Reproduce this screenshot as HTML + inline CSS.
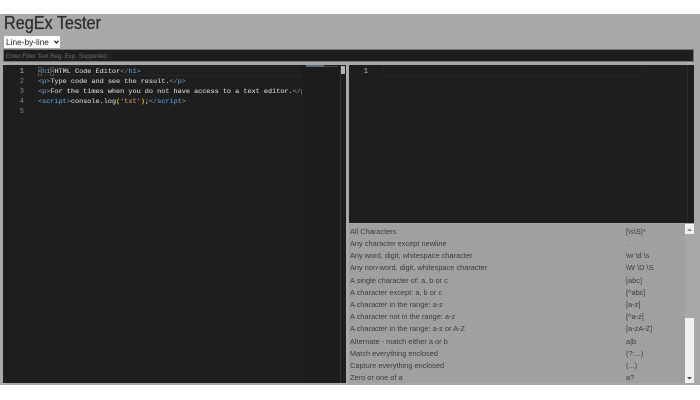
<!DOCTYPE html>
<html><head><meta charset="utf-8">
<style>
*{box-sizing:border-box}
html,body{margin:0;padding:0;width:700px;height:400px;background:#fff;overflow:hidden}
.a{position:absolute}
#page{position:absolute;left:0;top:14px;width:700px;height:371px;background:#a9a9a9;overflow:hidden}
body{font-family:"Liberation Sans",sans-serif}
.ln{position:absolute;font:7px/10px "Liberation Mono",monospace;color:#858585;width:16px;text-align:right}
.c{position:absolute;left:38px;font:6.85px/10px "Liberation Mono",monospace;color:#cfcfcf;white-space:pre;-webkit-text-stroke:.12px currentColor}
.t{color:#569cd6}.g{color:#808080}.y{color:#ffd700}.o{color:#ce9178}
.r{position:absolute;left:350px;width:330px;height:12px;font-size:7.4px;line-height:12px;color:#3c3c3c;white-space:pre}
.r b{position:absolute;left:276px;font-weight:normal}
</style></head><body>
<div id="page"></div>
<div class="a" style="left:4px;top:12px;font-size:18px;line-height:22px;font-weight:normal;color:#2b2f33;-webkit-text-stroke:.3px #2b2f33;transform:scaleX(.9);transform-origin:left top;white-space:nowrap">RegEx Tester</div>
<div class="a" style="left:4px;top:36px;width:56px;height:12px;background:#fff;font-size:8.3px;line-height:12px;color:#222;padding-left:2px">Line-by-line<svg class="a" style="left:50px;top:4px" width="5" height="4" viewBox="0 0 5 4"><path d="M.5 .8L2.5 3L4.5 .8" fill="none" stroke="#111" stroke-width="1.1"/></svg></div>
<div class="a" style="left:3px;top:49px;width:691px;height:13px;background:#1e1e1e;border:1px solid #757575;font-size:6.1px;line-height:13px;color:#6d6d6d;padding-left:2px">Enter Filter Text Reg. Exp. Supported</div>

<div class="a" style="left:3px;top:65px;width:343px;height:318px;background:#1e1e1e"></div>
<div class="a" style="left:37px;top:66px;width:265px;height:10px;border-top:1px solid #262626;border-bottom:1px solid #262626"></div>
<div class="ln" style="left:8px;top:67px;color:#c6c6c6">1</div>
<div class="ln" style="left:8px;top:77px">2</div>
<div class="ln" style="left:8px;top:87px">3</div>
<div class="ln" style="left:8px;top:97px">4</div>
<div class="ln" style="left:8px;top:107px">5</div>
<div class="a" style="left:38px;top:67px;width:4px;height:9px;border:1px solid #4a4a4a"></div>
<div class="a" style="left:50px;top:67px;width:4px;height:9px;border:1px solid #4a4a4a"></div>
<div class="c" style="top:67px"><span class="g">&lt;</span><span class="t">h1</span><span class="g">&gt;</span>HTML Code Editor<span class="g">&lt;/</span><span class="t">h1</span><span class="g">&gt;</span></div>
<div class="c" style="top:77px"><span class="g">&lt;</span><span class="t">p</span><span class="g">&gt;</span>Type code and see the result.<span class="g">&lt;/</span><span class="t">p</span><span class="g">&gt;</span></div>
<div class="c" style="top:87px;width:264px;overflow:hidden"><span class="g">&lt;</span><span class="t">p</span><span class="g">&gt;</span>For the times when you do not have access to a text editor.<span class="g">&lt;/</span><span class="t">p</span><span class="g">&gt;</span></div>
<div class="c" style="top:97px"><span class="g">&lt;</span><span class="t">script</span><span class="g">&gt;</span>console.log<span class="y">(</span><span class="o">'txt'</span><span class="y">)</span>;<span class="g">&lt;/</span><span class="t">script</span><span class="g">&gt;</span></div>

<div class="a" style="left:302px;top:65px;width:38px;height:318px;background:#1c1c1c"></div>
<div class="a" style="left:306px;top:65px;width:18px;height:2px;background:#5f6a78"></div>
<div class="a" style="left:324px;top:66px;width:14px;height:1px;background:#4a4a4a"></div>
<div class="a" style="left:340px;top:65px;width:1px;height:318px;background:#333"></div>
<div class="a" style="left:341px;top:66px;width:4px;height:8px;background:#b4b4b4"></div>

<div class="a" style="left:349px;top:65px;width:345px;height:158px;background:#1e1e1e"></div>
<div class="a" style="left:383px;top:66px;width:264px;height:10px;border:1px solid #252525"></div>
<div class="ln" style="left:352px;top:67px;color:#c6c6c6">1</div>
<div class="a" style="left:687px;top:65px;width:1px;height:158px;background:#2b2b2b"></div>

<div class="a" style="left:349px;top:224px;width:345px;height:159px;background:#a0a0a0"></div>
<div class="r" style="top:226px">All Characters<b>[\s\S]*</b></div>
<div class="r" style="top:238px">Any character except newline<b>.</b></div>
<div class="r" style="top:250px">Any word, digit, whitespace character<b>\w \d \s</b></div>
<div class="r" style="top:262px">Any non-word, digit, whitespace character<b>\W \D \S</b></div>
<div class="r" style="top:275px">A single character of: a, b or c<b>[abc]</b></div>
<div class="r" style="top:287px">A character except: a, b or c<b>[^abc]</b></div>
<div class="r" style="top:299px">A character in the range: a-z<b>[a-z]</b></div>
<div class="r" style="top:311px">A character not in the range: a-z<b>[^a-z]</b></div>
<div class="r" style="top:323px">A character in the range: a-z or A-Z<b>[a-zA-Z]</b></div>
<div class="r" style="top:336px">Alternate - match either a or b<b>a|b</b></div>
<div class="r" style="top:348px">Match everything enclosed<b>(?:...)</b></div>
<div class="r" style="top:360px">Capture everything enclosed<b>(...)</b></div>
<div class="r" style="top:372px;height:11px;overflow:hidden">Zero or one of a<b>a?</b></div>

<div class="a" style="left:685px;top:224px;width:9px;height:159px;background:#f1f1f1"></div>
<div class="a" style="left:685px;top:234px;width:9px;height:84px;background:#a8a8a8"></div>
<svg class="a" style="left:685px;top:224px" width="9" height="159" viewBox="0 0 9 159"><path d="M4.5 4.5L7 7H2Z" fill="#8a8a8a"/><path d="M2 153H7L4.5 155.5Z" fill="#444"/></svg>
</body></html>
